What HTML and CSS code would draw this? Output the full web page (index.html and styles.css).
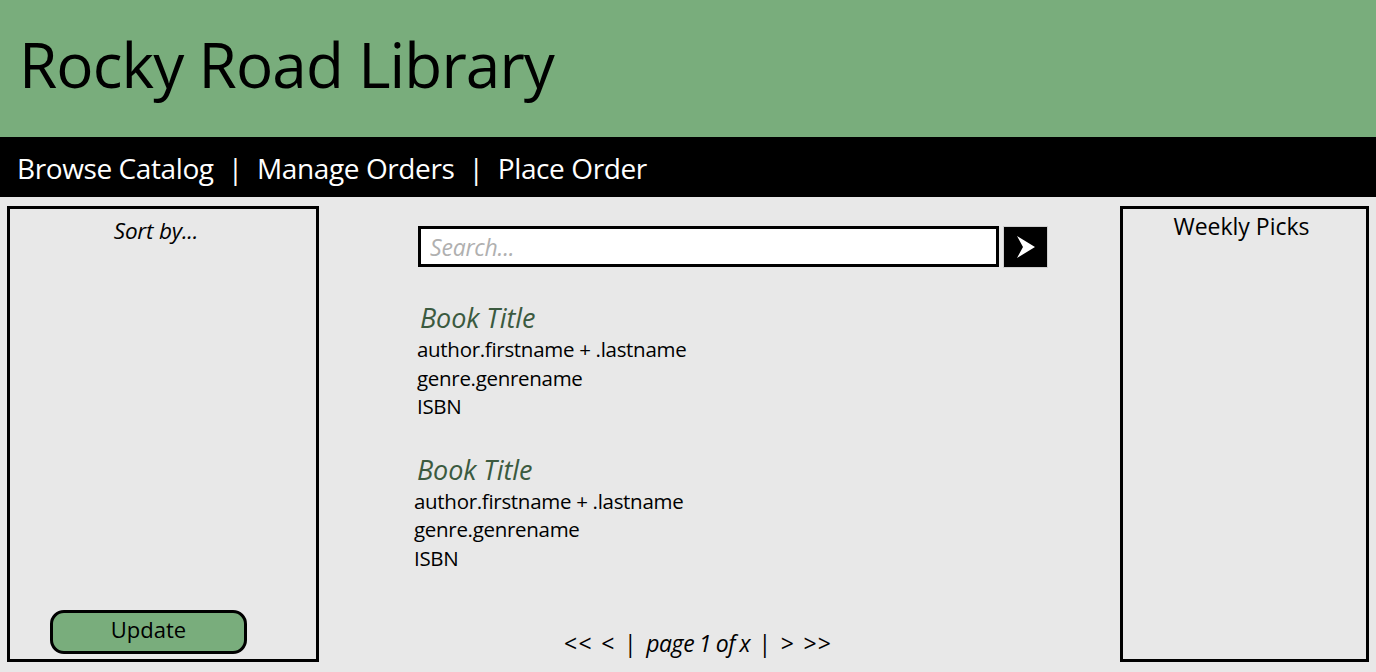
FILE: index.html
```html
<!DOCTYPE html>
<html lang="en">
<head>
<meta charset="utf-8">
<title>Rocky Road Library</title>
<link rel="stylesheet" href="styles.css">
</head>
<body>
<header class="masthead">
  <h1 class="site-title">Rocky Road Library</h1>
</header>
<nav class="navbar">
  <a class="nav-link" href="#">Browse Catalog</a>
  <span class="nav-sep">|</span>
  <a class="nav-link" href="#">Manage Orders</a>
  <span class="nav-sep">|</span>
  <a class="nav-link" href="#">Place Order</a>
</nav>
<main class="layout">
  <aside class="panel panel-sort">
    <div class="sort-label">Sort by...</div>
    <button class="update-btn" type="button">Update</button>
  </aside>
  <section class="content">
    <form class="search">
      <input class="search-input" type="text" placeholder="Search...">
      <button class="search-btn" type="button" aria-label="Search">
        <svg width="20" height="24" viewBox="0 0 20 24"><polygon points="1,1 19,12 1,23 7,12" fill="#fff"/></svg>
      </button>
    </form>
    <div class="results">
      <article class="book">
        <h2 class="book-title">Book Title</h2>
        <div class="book-line">author.firstname + .lastname</div>
        <div class="book-line">genre.genrename</div>
        <div class="book-line">ISBN</div>
      </article>
      <article class="book book-shift">
        <h2 class="book-title">Book Title</h2>
        <div class="book-line">author.firstname + .lastname</div>
        <div class="book-line">genre.genrename</div>
        <div class="book-line">ISBN</div>
      </article>
    </div>
    <div class="pager">&lt;&lt; &lt; | <em>page 1 of x</em> | &gt; &gt;&gt;</div>
  </section>
  <aside class="panel panel-picks">
    <div class="picks-label">Weekly Picks</div>
  </aside>
</main>
</body>
</html>
```
FILE: styles.css
```css
* { box-sizing: border-box; }
html, body {
  margin: 0;
  padding: 0;
}
body {
  background: #e8e8e8;
  font-family: "Open Sans", "Noto Sans", sans-serif;
  color: #000;
  height: 672px;
  overflow: hidden;
}
.masthead {
  background: #79ad7c;
  height: 137px;
  padding: 0 0 0 19px;
  display: flex;
  align-items: center;
}
.site-title {
  margin: 0;
  font-weight: 400;
  font-size: 62px;
  letter-spacing: -0.9px;
  line-height: 1;
  padding-bottom: 9px;
}
.navbar {
  background: #000;
  height: 60px;
  display: flex;
  align-items: center;
  padding-left: 17px;
  padding-top: 2px;
  font-size: 28px;
  color: #fff;
}
.nav-link {
  color: #fff;
  text-decoration: none;
  letter-spacing: -0.4px;
}
.nav-sep {
  margin: 0 14px;
}
.layout {
  display: grid;
  grid-template-columns: 312px 1fr 249px;
  padding: 9px 7px 10px 7px;
  height: 475px;
}
.panel {
  border: 3px solid #000;
  display: flex;
  flex-direction: column;
  align-items: center;
}
.panel-sort {
  padding-top: 6px;
  padding-right: 14px;
}
.sort-label {
  font-style: italic;
  font-size: 22.5px;
  letter-spacing: -0.2px;
}
.update-btn {
  margin-top: auto;
  margin-bottom: 5px;
  margin-right: 15px;
  width: 197px;
  height: 44px;
  background: #79ad7c;
  border: 3px solid #000;
  border-radius: 14px;
  font-family: inherit;
  font-size: 22px;
  padding: 0 0 6px;
  color: #000;
}
.panel-picks {
  padding-top: 1px;
  padding-right: 6px;
}
.picks-label {
  font-size: 23px;
  letter-spacing: 0;
}
.content {
  display: flex;
  flex-direction: column;
  padding-left: 99px;
  padding-top: 20px;
}
.search {
  display: flex;
  gap: 4px;
  margin: 0;
}
.search-input {
  width: 581px;
  height: 41px;
  border: 3px solid #000;
  background: #fff;
  padding: 0 9px;
  font-family: inherit;
  font-size: 23px;
  font-style: italic;
  outline: none;
}
.search-input::placeholder {
  color: #b0b0b0;
  letter-spacing: -0.2px;
}
.search-btn {
  width: 45px;
  height: 42px;
  background: #000;
  border: 1px solid #cfcfcf;
  padding: 0;
  display: flex;
  align-items: center;
  justify-content: center;
}
.results {
  padding-top: 32px;
  display: flex;
  flex-direction: column;
  gap: 31px;
}
.book-title {
  margin: 0 0 0 2px;
  font-weight: 400;
  font-style: italic;
  font-size: 27px;
  line-height: 35px;
  color: #3b5a3f;
  letter-spacing: -0.1px;
}
.book-line {
  font-size: 20.5px;
  line-height: 28.5px;
  letter-spacing: -0.3px;
  margin-left: -1px;
}
.book-shift {
  margin-left: -3px;
}
.pager {
  margin-top: auto;
  margin-bottom: 3px;
  padding-left: 146px;
  font-size: 23px;
  letter-spacing: 1.3px;
  word-spacing: 1px;
}
.pager em {
  font-style: italic;
  letter-spacing: -0.4px;
  word-spacing: -1px;
}
```
